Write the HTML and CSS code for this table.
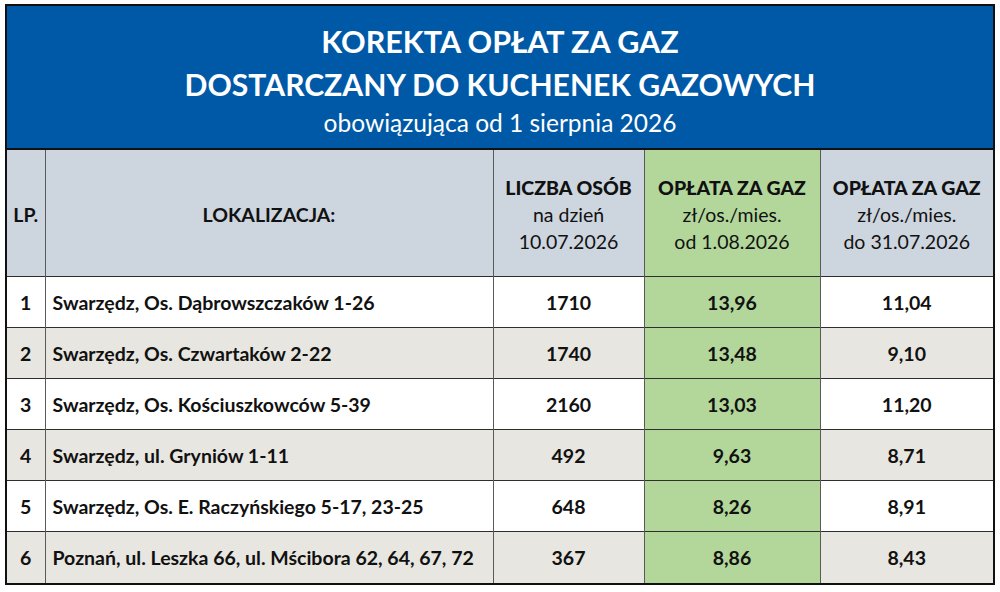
FILE: index.html
```html
<!DOCTYPE html>
<html lang="pl">
<head>
<meta charset="utf-8">
<title>Korekta opłat za gaz</title>
<link rel="stylesheet" href="styles.css">
</head>
<body>
<div class="sheet">
  <div class="banner">
    <div class="banner-l1">KOREKTA OPŁAT ZA GAZ</div>
    <div class="banner-l2">DOSTARCZANY DO KUCHENEK GAZOWYCH</div>
    <div class="banner-l3">obowiązująca od 1 sierpnia 2026</div>
  </div>
  <table class="grid">
    <colgroup>
      <col class="c-lp"><col class="c-loc"><col class="c-n"><col class="c-new"><col class="c-old">
    </colgroup>
    <thead>
      <tr class="head">
        <th>LP.</th>
        <th>LOKALIZACJA:</th>
        <th><b>LICZBA OSÓB</b><span>na dzień</span><span>10.07.2026</span></th>
        <th class="green"><b>OPŁATA ZA GAZ</b><span>zł/os./mies.</span><span>od 1.08.2026</span></th>
        <th><b>OPŁATA ZA GAZ</b><span>zł/os./mies.</span><span>do 31.07.2026</span></th>
      </tr>
    </thead>
    <tbody>
      <tr><td>1</td><td class="loc">Swarzędz, Os. Dąbrowszczaków 1-26</td><td>1710</td><td class="green">13,96</td><td>11,04</td></tr>
      <tr class="alt"><td>2</td><td class="loc">Swarzędz, Os. Czwartaków 2-22</td><td>1740</td><td class="green">13,48</td><td>9,10</td></tr>
      <tr><td>3</td><td class="loc">Swarzędz, Os. Kościuszkowców 5-39</td><td>2160</td><td class="green">13,03</td><td>11,20</td></tr>
      <tr class="alt"><td>4</td><td class="loc">Swarzędz, ul. Gryniów 1-11</td><td>492</td><td class="green">9,63</td><td>8,71</td></tr>
      <tr><td>5</td><td class="loc">Swarzędz, Os. E. Raczyńskiego 5-17, 23-25</td><td>648</td><td class="green">8,26</td><td>8,91</td></tr>
      <tr class="alt"><td>6</td><td class="loc">Poznań, ul. Leszka 66, ul. Mścibora 62, 64, 67, 72</td><td>367</td><td class="green">8,86</td><td>8,43</td></tr>
    </tbody>
  </table>
</div>
</body>
</html>
```
FILE: styles.css
```css
html, body {
  margin: 0;
  padding: 0;
  background: #ffffff;
}
body {
  font-family: Lato, "Open Sans", sans-serif;
  color: #111111;
}
.sheet {
  width: 986px;
  margin: 4px 0 0 5px;
  border: 2px solid #111111;
}
.banner {
  background: #0059a6;
  color: #ffffff;
  text-align: center;
  height: 144px;
  border-bottom: 2px solid #111111;
  box-sizing: border-box;
  padding-top: 14px;
}
.banner-l1, .banner-l2 {
  font-weight: 700;
  font-size: 30.5px;
  line-height: 43px;
  height: 43px;
}
.banner-l2 { font-size: 30.1px; }
.banner-l3 {
  font-size: 24.5px;
  line-height: 34px;
}
.grid {
  width: 986px;
  border-collapse: collapse;
  table-layout: fixed;
}
.c-lp { width: 38px; }
.c-loc { width: 448px; }
.c-n { width: 151px; }
.c-new { width: 176px; }
.c-old { width: 173px; }
.grid th, .grid td {
  border-left: 1px solid #5a5a5a;
  border-top: 1px solid #2e2e2e;
  padding: 0;
  text-align: center;
  vertical-align: middle;
  font-size: 19.5px;
  font-weight: 700;
  white-space: nowrap;
}
.grid th:first-child, .grid td:first-child { border-left: none; }
.grid thead th { border-top: none; }
.head th {
  background: #cdd5df;
  height: 123px;
  line-height: 27px;
  padding-top: 3px;
}
.head th b, .head th span { display: block; }
.head th span { font-weight: 400; }
.grid tbody tr { height: 51px; }
.grid tbody td { background: #ffffff; padding-top: 1px; }
.grid tbody tr.alt td { background: #e8e6e0; }
.grid td.loc { text-align: left; padding-left: 7px; }
.grid .green, .grid tbody tr td.green { background: #b3d79b; }
```
